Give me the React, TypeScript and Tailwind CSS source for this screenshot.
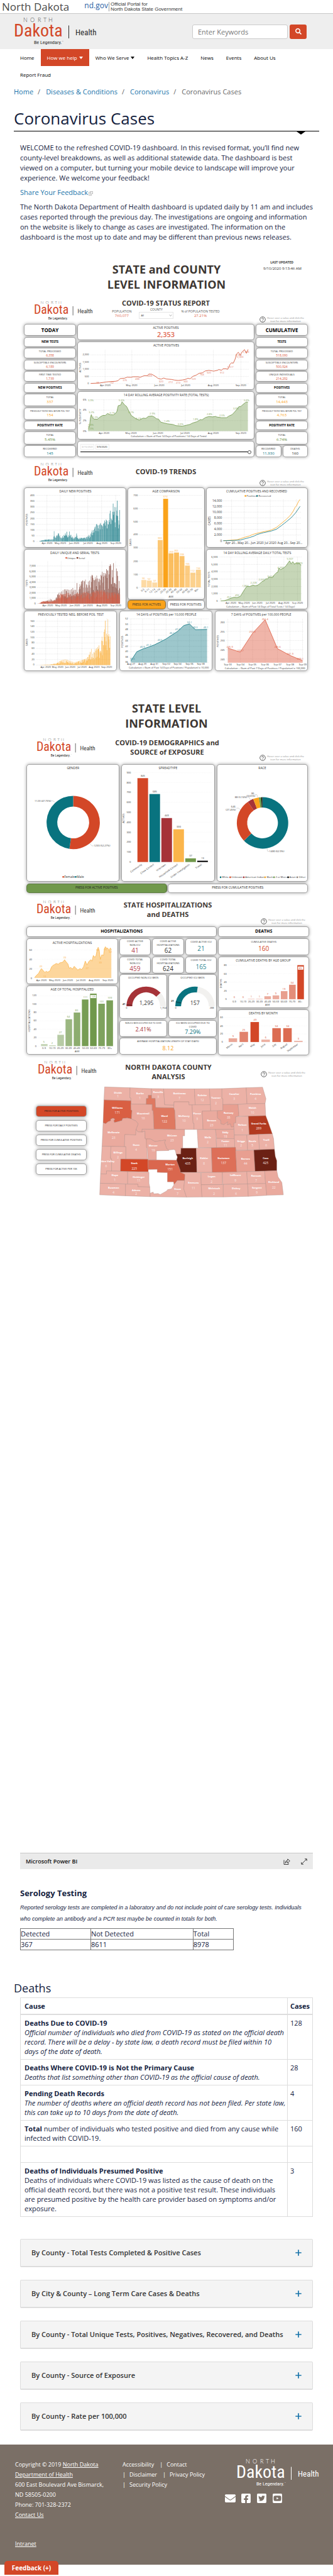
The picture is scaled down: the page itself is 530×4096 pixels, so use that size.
import React from "react";
import { FaSearch, FaEnvelope, FaFacebookSquare, FaTwitterSquare, FaYoutubeSquare } from "react-icons/fa";

/* Charts are plotted on a fine grid; sx and sy turn grid units into pixels. */
const sx = (x: number) => x * 0.338;
const sy = (y: number) => y * 0.225;

type Pts = number[];
const toPoints = (pts: Pts) => {
  const out: string[] = [];
  for (let i = 0; i < pts.length; i += 2) out.push(`${sx(pts[i]).toFixed(2)},${sy(pts[i + 1]).toFixed(2)}`);
  return out.join(" ");
};

const INK = "#333333";
const RUST = "#d34727";
const TEAL = "#09737f";
const GREEN = "#70984b";
const GOLD = "#faa31b";
const CRIMSON = "#a63338";

function Txt({ x, y, s = 4, fill = INK, a = "middle", rot, bold, children }: { x: number; y: number; s?: number; fill?: string; a?: "start" | "middle" | "end"; rot?: number; bold?: boolean; children: React.ReactNode }) {
  const px = Math.round(sx(x));
  const py = Math.round(sy(y) + s * 0.36);
  return (
    <text x={px} y={py} fontSize={s} fill={fill} textAnchor={a} fontWeight={bold ? 700 : 400} transform={rot ? `rotate(${rot} ${px} ${py})` : undefined}>
      {children}
    </text>
  );
}

const cardLook = "rounded-[4px] bg-white shadow-[0_0_0_1px_#a3a3a3,0_0_4px_2px_rgba(0,0,0,0.25)]";

function Chart({ box, label, children }: { box: [number, number, number, number]; label: string; children: React.ReactNode }) {
  const [x0, y0, x1, y1] = box;
  return (
    <div className={cardLook}>
      <svg role="img" aria-label={label} viewBox={`${sx(x0)} ${sy(y0)} ${sx(x1 - x0)} ${sy(y1 - y0)}`} className="block h-auto w-full">
        {children}
      </svg>
    </div>
  );
}

function Ticks({ xs = [], xl = [], xy = 0, ys = [], yl = [], yx = 0, x0, x1, top = 0, base = 0, s = 4, faint }: { xs?: number[]; xl?: string[]; xy?: number; ys?: number[]; yl?: string[]; yx?: number; x0: number; x1: number; top?: number; base?: number; s?: number; faint?: boolean }) {
  return (
    <g>
      {ys.map((y, i) => (
        <g key={yl[i]}>
          <line x1={sx(x0)} x2={sx(x1)} y1={sy(y)} y2={sy(y)} stroke={faint ? "#ececec" : "#c8c8c8"} strokeWidth={0.5} strokeDasharray="0.7 0.9" />
          <Txt x={yx} y={y} s={s} a="end">{yl[i]}</Txt>
        </g>
      ))}
      {xs.map((x, i) => (
        <g key={xl[i]}>
          {!faint && <line x1={sx(x)} x2={sx(x)} y1={sy(top)} y2={sy(base)} stroke="#c8c8c8" strokeWidth={0.5} strokeDasharray="0.7 0.9" />}
          <Txt x={x} y={xy} s={s}>{xl[i]}</Txt>
        </g>
      ))}
    </g>
  );
}

const Line = ({ pts, c }: { pts: Pts; c: string }) => <polyline points={toPoints(pts)} fill="none" stroke={c} strokeWidth={0.8} strokeLinejoin="round" />;

const Area = ({ pts, base, c, o = 0.4 }: { pts: Pts; base: number; c: string; o?: number }) => (
  <g>
    <polygon points={toPoints([pts[0], base, ...pts, pts[pts.length - 2], base])} fill={c} fillOpacity={o} />
    <Line pts={pts} c={c} />
  </g>
);

const Rect = ({ x, y, w, base, c, o = 1 }: { x: number; y: number; w: number; base: number; c: string; o?: number }) => (
  <rect x={sx(x)} y={sy(y)} width={sx(w)} height={sy(base - y)} fill={c} fillOpacity={o} />
);

const noise = (n: number) => {
  const v = Math.sin(n * 12.9898) * 43758.5453;
  return v - Math.floor(v);
};

function Daily({ env, base, step, c, low = 0.55, seed = 1 }: { env: Pts; base: number; step: number; c: string; low?: number; seed?: number }) {
  const bars: React.ReactNode[] = [];
  let k = 0;
  let n = 0;
  for (let x = env[0]; x < env[env.length - 2]; x += step) {
    while (k < env.length - 4 && x > env[k + 2]) k += 2;
    const t = (x - env[k]) / (env[k + 2] - env[k]);
    const top = env[k + 1] + (env[k + 3] - env[k + 1]) * t;
    const f = n % 3 === 0 ? 1 : low + (1 - low) * noise(n + seed);
    bars.push(<Rect key={n} x={x} y={base - (base - top) * f} w={step * 0.9} base={base} c={c} o={0.6 + 0.4 * noise(n * 3 + seed)} />);
    n++;
  }
  return <g>{bars}</g>;
}

const months = ["Apr 2020", "May 2020", "Jun 2020", "Jul 2020", "Aug 2020", "Sep 2020"];

const Labels = ({ items, c, s = 4 }: { items: [number, number, string][]; c: string; s?: number }) => (
  <g>
    {items.map(([x, y, t], i) => (
      <Txt key={i} x={x} y={y} s={s} fill={c}>{t}</Txt>
    ))}
  </g>
);

function Legend({ y, items, s = 4 }: { y: number; s?: number; items: [number, string, string][] }) {
  return (
    <g>
      {items.map(([x, c, t]) => (
        <g key={t}>
          <circle cx={sx(x)} cy={sy(y)} r={1.3} fill={c} />
          <Txt x={x + 6} y={y + 2} s={s} a="start">{t}</Txt>
        </g>
      ))}
    </g>
  );
}

function ring(cx: number, cy: number, R: number, r: number, a0: number, a1: number) {
  const X = sx(cx), Y = sy(cy);
  const p = (rad: number, a: number) => `${(X + rad * Math.sin(a * 2 * Math.PI)).toFixed(2)} ${(Y - rad * Math.cos(a * 2 * Math.PI)).toFixed(2)}`;
  const big = a1 - a0 > 0.5 ? 1 : 0;
  return `M${p(R, a0)}A${R} ${R} 0 ${big} 1 ${p(R, a1)}L${p(r, a1)}A${r} ${r} 0 ${big} 0 ${p(r, a0)}Z`;
}

function Logo({ className, white }: { className: string; white?: boolean }) {
  const dark = white ? "#ffffff" : "#2b2b2b";
  return (
    <svg role="img" aria-label="North Dakota Health, Be Legendary" viewBox="0 0 131 45" className={`overflow-visible ${className}`} fontFamily="'Roboto Condensed', Roboto, sans-serif">
      <text x="15 26 38 47 55" y="7" fontSize="9" fill={white ? "#ffffff" : "#555555"} fontFamily="Lato, sans-serif" fontWeight="300">NORTH</text>
      <text x="0" y="30" fontSize="28" fill={white ? "#ffffff" : RUST}>Dakota</text>
      <text x="32" y="42" fontSize="8" fill={dark}>Be Legendary.</text>
      <text x="77" y="39" fontSize="3" fill={dark}>™</text>
      <line x1="87.5" x2="87.5" y1="12.5" y2="33" stroke={dark} strokeWidth="1" />
      <text x="98" y="28" fontSize="13" fill={dark}>Health</text>
    </svg>
  );
}

function SheetHead({ className, logoClass = "", helpClass = "", children }: { className: string; logoClass?: string; helpClass?: string; children: React.ReactNode }) {
  return (
    <div className={`grid grid-cols-[1fr_auto_1fr] ${className}`}>
      <div className={`pl-[14px] ${logoClass}`}>
        <Logo className="h-8 w-[95px]" />
      </div>
      <div className="text-center">{children}</div>
      <div className={`flex items-center justify-end gap-[2px] self-end pr-[5px] ${helpClass}`}>
        <svg viewBox="0 0 10 10" className="size-[10px]">
          <circle cx="5" cy="5" r="4.3" fill="none" stroke="#222" strokeWidth="0.7" />
          <path d="M3.6 4a1.4 1.4 0 1 1 2.1 1.2Q5 5.600 5 6.300M5 7v.7" fill="none" stroke="#222" strokeWidth="0.7" />
        </svg>
        <p className="text-center text-[4px] leading-[5px] text-[#8a8a8a]">
          Hover over a value and click the
          <br />
          icon for more information
        </p>
      </div>
    </div>
  );
}

const sheetTitle = "text-[11px] leading-[15px] font-bold text-[#3d3733]";
const bigTitle = "text-center text-[18px] leading-6 font-bold text-[#3d3733]";

function Head({ h, size = "text-[5px]", children }: { h: string; size?: string; children: React.ReactNode }) {
  return <div className={`${cardLook} flex items-center justify-center font-bold text-black ${h} ${size}`}>{children}</div>;
}

function Stat({ h, label, value, color, size = "text-[5px] leading-[6px]", tiny }: { h: string; label: React.ReactNode; value: string; color: string; size?: string; tiny?: boolean }) {
  return (
    <div className={`${cardLook} flex flex-col items-center justify-center text-center ${h}`}>
      <span className={`whitespace-nowrap text-[#333] ${tiny ? "text-[3px] leading-[4px]" : "text-[4px] leading-[6px]"}`}>{label}</span>
      <span className={`${size} ${color}`}>{value}</span>
    </div>
  );
}

function StatusSheet() {
  const six = "text-[6px] leading-[8px]";
  return (
    <section className="pr-[41px] pl-[39px]">
      <SheetHead className="h-[52px] pt-[10px]" logoClass="pt-[4px]" helpClass="pb-[3px]">
        <h3 className={sheetTitle}>COVID-19 STATUS REPORT</h3>
        <div className="mt-[3px] flex items-start justify-center gap-3 text-[5px] leading-[7px] text-[#555]">
          <p>
            POPULATION
            <br />
            <span className="text-[6px] text-[#e06a50]">760,077</span>
          </p>
          <label className="-mt-[3px] flex flex-col items-center">
            COUNTY
            <span className="grid items-center">
              <select className="col-start-1 row-start-1 h-[11px] w-[55px] appearance-none border border-[#e6e6e6] bg-white pl-[2px] text-[4px] text-[#333]" defaultValue="All">
                <option>All</option>
              </select>
              <svg viewBox="0 0 6 4" className="col-start-1 row-start-1 mr-[2px] h-[3px] w-[5px] justify-self-end" fill="none" stroke="#555" strokeWidth="0.6">
                <path d="M.5.5 3 3.500 5.500.5" />
              </svg>
            </span>
          </label>
          <p>
            % of POPULATION TESTED
            <br />
            <span className="text-[6px] text-[#e06a50]">27.21%</span>
          </p>
        </div>
      </SheetHead>
      <div className="grid grid-cols-[81fr_280fr_81fr] gap-x-1">
        <div className="flex flex-col justify-between">
          <Head h="h-[17px]" size="text-[8px]">TODAY</Head>
          <Head h="h-[14px]">NEW TESTS</Head>
          <Stat h="h-[15px]" label="TOTAL PROCESSED" value="6,358" color="text-[#d9553a]" />
          <Stat h="h-[15px]" label="SUSCEPTIBLE ENCOUNTERS" value="6,189" color="text-[#d9553a]" />
          <Stat h="h-[15px]" label="FIRST TIME TESTED" value="1,739" color="text-[#d9553a]" />
          <Head h="h-[14px]">NEW POSITIVES</Head>
          <Stat h="h-[18px]" label="TOTAL" value="337" color="text-[#faa31b]" size={six} />
          <Stat h="h-[18px]" label="PREVIOUSLY TESTED NEG. BEFORE POS. TEST" tiny value="154" color="text-[#faa31b]" size={six} />
          <Head h="h-[13px]">POSITIVITY RATE</Head>
          <Stat h="h-[19px]" label="TOTAL" value="5.45%" color="text-[#5f8a3a]" size={six} />
          <Stat h="h-[17px]" label="RECOVERED" value="145" color="text-[#09737f]" size={six} />
        </div>
        <div className="flex flex-col gap-[4px]">
          <div className={`${cardLook} flex h-[24px] flex-col items-center text-center`}>
            <span className="mt-[2px] text-[5px] leading-[7px] text-[#333]">ACTIVE POSITIVES</span>
            <span className="text-[11px] leading-[14px] font-semibold text-[#e0664f]">2,353</span>
          </div>
          <Chart box={[368, 616, 1197, 949]} label="Active positives by day">
            <Txt x={783} y={639} s={5}>ACTIVE POSITIVES</Txt>
            <Ticks xs={[496, 622, 751, 877, 1006, 1136]} xl={months} xy={924} ys={[706, 757, 808, 859, 910]} yl={["2,000", "1,500", "1,000", "500", "0"]} yx={420} x0={428} x1={1173} top={672} base={910} />
            <Txt x={383} y={790} rot={-90}>ACTIVES</Txt>
            <Line c={RUST} pts={[428, 908, 470, 905, 500, 898, 520, 895, 545, 893, 557, 889, 567, 874, 588, 871, 600, 864, 618, 865, 628, 861, 652, 861, 661, 865, 672, 858, 682, 853, 695, 854, 702, 842, 716, 843, 735, 860, 745, 872, 760, 878, 772, 870, 785, 877, 810, 880, 822, 884, 840, 887, 860, 884, 878, 878, 886, 872, 897, 875, 910, 858, 925, 850, 940, 836, 955, 833, 968, 820, 985, 816, 1000, 819, 1008, 821, 1025, 816, 1032, 810, 1045, 815, 1052, 805, 1064, 804, 1074, 808, 1085, 773, 1092, 762, 1100, 765, 1108, 740, 1117, 698, 1124, 688, 1133, 708, 1141, 686, 1153, 669, 1162, 695, 1170, 668]} />
            <Labels c="#e0765f" items={[[463, 906, "38"], [526, 905, "132"], [588, 888, "376"], [648, 880, "488"], [706, 857, "669"], [760, 894, "320"], [806, 900, "272"], [839, 906, "210"], [877, 897, "300"], [914, 876, "520"], [952, 849, "768"], [986, 834, "920"], [1048, 834, "912"], [1086, 792, "1,317"], [1125, 709, "2,164"], [1132, 723, "2,003"], [1160, 687, "2,353"]]} />
          </Chart>
          <Chart box={[368, 967, 1197, 1303]} label="14 day rolling average positivity rate">
            <Txt x={783} y={991} s={5}>14 DAY ROLLING AVERAGE POSITIVITY RATE (TOTAL TESTS)</Txt>
            <Ticks xs={[490, 617, 747, 874, 1005, 1136]} xl={months} xy={1260} ys={[1023, 1097, 1171, 1245]} yl={["6%", "4%", "2%", "0%"]} yx={408} x0={416} x1={1173} top={1023} base={1245} />
            <Txt x={383} y={1134} rot={-90}>% POSITIVITY</Txt>
            <Area c={GREEN} base={1245} pts={[416, 1210, 422, 1218, 427, 1150, 431, 1128, 436, 1148, 443, 1160, 460, 1161, 470, 1147, 485, 1134, 497, 1134, 508, 1120, 520, 1129, 535, 1130, 545, 1120, 552, 1105, 558, 1065, 570, 1060, 576, 1037, 588, 1060, 597, 1070, 607, 1100, 620, 1135, 637, 1153, 657, 1167, 675, 1153, 688, 1155, 700, 1141, 718, 1138, 730, 1147, 737, 1157, 748, 1160, 758, 1181, 775, 1188, 790, 1193, 815, 1198, 830, 1206, 860, 1210, 880, 1203, 895, 1198, 910, 1187, 930, 1178, 945, 1163, 953, 1165, 970, 1148, 985, 1142, 1003, 1144, 1018, 1141, 1022, 1145, 1045, 1150, 1068, 1150, 1080, 1138, 1095, 1128, 1105, 1112, 1118, 1090, 1126, 1073, 1136, 1070, 1147, 1055, 1160, 1040, 1169, 1040]} />
            <Labels c="#7fa55c" items={[[430, 1031, "5.9%"], [431, 1112, "3.2%"], [449, 1149, "2.2%"], [430, 1203, "0.8%"], [430, 1230, "0.0%"], [529, 1118, "3.1%"], [575, 1031, "5.6%"], [617, 1115, "3.1%"], [655, 1156, "2.1%"], [719, 1124, "2.9%"], [787, 1178, "1.4%"], [853, 1196, "0.9%"], [922, 1163, "1.8%"], [989, 1128, "2.8%"], [1047, 1136, "2.5%"], [1111, 1085, "3.9%"], [1162, 1031, "5.6%"]]} />
            <Txt x={796} y={1284}>Calculation = (Sum of Past 14 Days of Positives / 14 Days of Tests)</Txt>
          </Chart>
          <div className={`${cardLook} h-[24px] px-1 pt-1`}>
            <div className="flex gap-[2px]">
              <input aria-label="Start date" className="h-[9px] w-[22px] border border-[#eee] px-[1px] text-[4px] text-[#b5b5b5]" defaultValue="3/15/2020" />
              <input aria-label="End date" className="h-[9px] w-[22px] border border-[#eee] px-[1px] text-[4px] text-[#222]" defaultValue="9/9/2020" />
            </div>
            <input aria-label="Date range" type="range" min="0" max="100" defaultValue="100" className="block h-[7px] w-full appearance-none bg-[linear-gradient(#000,#000)] bg-[length:100%_1px] bg-center bg-no-repeat [&::-webkit-slider-thumb]:size-[6px] [&::-webkit-slider-thumb]:appearance-none [&::-webkit-slider-thumb]:rounded-full [&::-webkit-slider-thumb]:border [&::-webkit-slider-thumb]:border-[#555] [&::-webkit-slider-thumb]:bg-white" />
          </div>
        </div>
        <div className="flex flex-col justify-between">
          <Head h="h-[17px]" size="text-[8px]">CUMULATIVE</Head>
          <Head h="h-[14px]">TESTS</Head>
          <Stat h="h-[15px]" label="TOTAL PROCESSED" value="518,090" color="text-[#d9553a]" />
          <Stat h="h-[15px]" label="SUSCEPTIBLE ENCOUNTERS" value="500,924" color="text-[#d9553a]" />
          <Stat h="h-[15px]" label="UNIQUE INDIVIDUALS" value="214,292" color="text-[#d9553a]" />
          <Head h="h-[14px]">POSITIVES</Head>
          <Stat h="h-[18px]" label="TOTAL" value="14,443" color="text-[#faa31b]" size={six} />
          <Stat h="h-[18px]" label="PREVIOUSLY TESTED NEG. BEFORE POS. TEST" tiny value="4,763" color="text-[#faa31b]" size={six} />
          <Head h="h-[13px]">POSITIVITY RATE</Head>
          <Stat h="h-[19px]" label="TOTAL" value="6.74%" color="text-[#5f8a3a]" size={six} />
          <div className="grid grid-cols-2 gap-1">
            <Stat h="h-[17px]" label="RECOVERED" value="11,930" color="text-[#09737f]" size={six} />
            <Stat h="h-[17px]" label="DEATHS" value="160" color="text-[#222]" size={six} />
          </div>
        </div>
      </div>
    </section>
  );
}

const ages = ["0-5", "6-11", "12-14", "15-19", "20-29", "30-39", "40-49", "50-59", "60-69", "70-79", "80+"];
const ageCases = [56, 52, 37, 360, 674, 259, 265, 238, 166, 112, 134];
const ageTone = [0.4, 0.4, 0.4, 0.6, 1, 0.7, 0.7, 0.65, 0.55, 0.5, 0.5];

function TrendsSheet() {
  return (
    <section className="pr-[41px] pl-[39px]">
      <SheetHead className="h-[50px] pt-[9px]" helpClass="pb-[3px]">
        <h3 className={`${sheetTitle} pt-[7px]`}>COVID-19 TRENDS</h3>
      </SheetHead>
      <div className="grid grid-cols-[161fr_121fr_160fr] gap-x-1">
        <div className="flex flex-col justify-between">
          <Chart box={[116, 239, 591, 654]} label="Daily new positives">
            <Txt x={355} y={262} s={5}>DAILY NEW POSITIVES</Txt>
            <Ticks xs={[221, 284, 350, 413, 478, 544]} xl={months} xy={630} ys={[291, 332, 372, 413, 454, 495, 535, 576, 616]} yl={["400", "350", "300", "250", "200", "150", "100", "50", "0"]} yx={164} x0={170} x1={565} top={288} base={616} />
            <Txt x={130} y={455} rot={-90}>POSITIVES</Txt>
            <Daily c={TEAL} base={616} step={2.2} env={[188, 611, 210, 603, 230, 600, 246, 598, 251, 595, 254, 543, 260, 590, 275, 555, 285, 590, 300, 570, 314, 546, 320, 585, 325, 540, 335, 575, 345, 590, 355, 580, 360, 558, 365, 590, 385, 590, 400, 588, 412, 580, 417, 566, 422, 590, 428, 540, 440, 535, 445, 518, 455, 488, 462, 515, 468, 490, 475, 482, 480, 510, 490, 470, 502, 455, 509, 495, 517, 395, 521, 410, 526, 480, 531, 350, 536, 313, 541, 480, 546, 325, 551, 328, 556, 520, 559, 420, 563, 343]} />
          </Chart>
          <Chart box={[116, 675, 591, 1092]} label="Daily unique and serial tests">
            <Txt x={353} y={698} s={5}>DAILY UNIQUE AND SERIAL TESTS</Txt>
            <Legend y={733} items={[[312, "#dd5a40", "Unique"], [364, "#7a3528", "Serial"]]} />
            <Ticks xs={[225, 288, 352, 415, 479, 544]} xl={months} xy={1069} ys={[790, 828, 866, 904, 941, 979, 1017, 1055]} yl={["7,000", "6,000", "5,000", "4,000", "3,000", "2,000", "1,000", "0"]} yx={168} x0={175} x1={565} top={757} base={1055} />
            <Txt x={130} y={905} rot={-90}>TESTS</Txt>
            <Daily c="#7a3528" base={1055} step={2.2} low={0.4} seed={7} env={[190, 1050, 205, 1038, 220, 1035, 237, 1022, 250, 1035, 262, 1020, 272, 980, 285, 975, 300, 955, 316, 955, 330, 960, 346, 940, 352, 985, 361, 903, 368, 990, 372, 925, 385, 890, 395, 895, 402, 885, 410, 940, 416, 885, 425, 900, 430, 828, 438, 885, 445, 890, 451, 840, 458, 880, 470, 880, 477, 828, 488, 840, 498, 840, 502, 790, 508, 830, 517, 762, 525, 830, 535, 757, 541, 950, 546, 810, 551, 780, 556, 980, 563, 815]} />
            <Daily c="#dd5a40" base={1055} step={2.2} low={0.4} seed={3} env={[180, 1054, 195, 1042, 215, 1036, 240, 1035, 262, 1030, 275, 1000, 285, 985, 300, 990, 320, 978, 340, 1000, 361, 980, 380, 985, 400, 970, 420, 985, 450, 965, 480, 960, 510, 978, 540, 975, 563, 990]} />
          </Chart>
        </div>
        <div className="flex flex-col justify-between">
          <Chart box={[603, 239, 960, 1020]} label="Age comparison">
            <Txt x={782} y={262} s={5}>AGE COMPARISON</Txt>
            <Ticks ys={[291, 384, 477, 569, 662, 754, 847, 939]} yl={["700", "600", "500", "400", "300", "200", "100", "0"]} yx={648} x0={653} x1={950} />
            <Txt x={618} y={615} rot={-90}>CASES</Txt>
            {ageCases.map((v, i) => {
              const x = 665 + i * 25.6;
              const top = 939 - v * 0.926;
              return (
                <g key={ages[i]}>
                  <Rect x={x} y={top} w={23} base={939} c={GOLD} o={ageTone[i]} />
                  <Txt x={x + 11} y={top - 13} fill="#fbb14a">{v}</Txt>
                  <Txt x={x + 14} y={950} a="end" rot={-35}>{ages[i]}</Txt>
                </g>
              );
            })}
            <Txt x={805} y={1002}>AGE</Txt>
          </Chart>
          <div className="grid grid-cols-2 gap-1 text-[5px] whitespace-nowrap text-[#333]">
            <button className="h-[13px] rounded-[4px] bg-[#faa31b] shadow-[0_0_0_1px_#9a7a40,0_0_4px_2px_rgba(0,0,0,0.25)]">PRESS FOR ACTIVES</button>
            <button className={`${cardLook} h-[13px]`}>PRESS FOR POSITIVES</button>
          </div>
        </div>
        <div className="flex flex-col gap-1">
          <Chart box={[972, 239, 1445, 656]} label="Cumulative positives and recovered">
            <Txt x={1208} y={262} s={5}>CUMULATIVE POSITIVES AND RECOVERED</Txt>
            <Legend y={295} items={[[1154, GOLD, "Positives"], [1209, TEAL, "Recovered"]]} />
            <Ticks s={5} xs={[1089, 1149, 1211, 1271, 1333, 1394]} xl={["Apr 20...", "May 20...", "Jun 2020", "Jul 2020", "Aug 20...", "Sep 20..."]} xy={629} ys={[329, 369, 409, 450, 490, 531, 571, 612]} yl={["14,000", "12,000", "10,000", "8,000", "6,000", "4,000", "2,000", "0"]} yx={1043} x0={1049} x1={1418} top={320} base={612} />
            <Txt x={990} y={465} s={5} rot={-90}>CASES</Txt>
            <Line c={GOLD} pts={[1050, 611, 1080, 608, 1115, 604, 1130, 597, 1150, 587, 1172, 578, 1190, 566, 1220, 554, 1245, 546, 1275, 536, 1300, 517, 1320, 493, 1345, 462, 1365, 433, 1380, 400, 1388, 375, 1395, 364, 1403, 336, 1411, 320]} />
            <Line c={TEAL} pts={[1050, 611, 1100, 609, 1130, 606, 1150, 598, 1175, 588, 1195, 578, 1211, 566, 1240, 554, 1275, 543, 1300, 530, 1325, 503, 1350, 473, 1370, 448, 1390, 415, 1411, 369]} />
          </Chart>
          <Chart box={[972, 675, 1445, 1092]} label="14 day rolling average daily total tests">
            <Txt x={1210} y={698} s={5}>14 DAY ROLLING AVERAGE DAILY TOTAL TESTS</Txt>
            <Ticks xs={[1085, 1147, 1210, 1272, 1335, 1399]} xl={months} xy={1053} ys={[727, 779, 831, 883, 935, 986, 1038]} yl={["6,000", "5,000", "4,000", "3,000", "2,000", "1,000", "0"]} yx={1023} x0={1032} x1={1420} top={727} base={1038} />
            <Txt x={987} y={880} rot={-90}>TOTAL TESTS</Txt>
            <Area c={GREEN} base={1038} pts={[1038, 1037, 1055, 1035, 1070, 1028, 1085, 1018, 1100, 1011, 1115, 1013, 1130, 1005, 1137, 988, 1150, 957, 1160, 935, 1175, 935, 1190, 925, 1200, 930, 1212, 926, 1222, 915, 1232, 900, 1242, 895, 1250, 880, 1258, 882, 1265, 867, 1280, 873, 1292, 850, 1300, 838, 1306, 835, 1312, 805, 1320, 817, 1335, 803, 1345, 790, 1354, 770, 1362, 754, 1369, 775, 1377, 760, 1386, 778, 1392, 768, 1408, 770, 1416, 787]} />
            <Labels c="#7fa55c" items={[[1038, 1024, "1"], [1076, 1010, "251"], [1116, 999, "495"], [1155, 933, "1,804"], [1191, 910, "2,228"], [1231, 887, "2,656"], [1271, 863, "3,154"], [1320, 803, "4,203"], [1364, 740, "5,507"], [1407, 772, "4,870"]]} />
            <Txt x={1226} y={1076}>Calculation = (Sum of Past 14 Days of Total Tests / 14 Days)</Txt>
          </Chart>
        </div>
      </div>
      <div className="mt-1 grid grid-cols-3 gap-x-[6px]">
        <Chart box={[116, 1109, 548, 1527]} label="Previously tested negative before positive test">
          <Txt x={333} y={1132} s={5}>PREVIOUSLY TESTED NEG. BEFORE POS. TEST</Txt>
          <Ticks xs={[216, 272, 331, 387, 445, 504]} xl={months} xy={1503} ys={[1179, 1218, 1255, 1294, 1333, 1372, 1411, 1450, 1489]} yl={["160", "140", "120", "100", "80", "60", "40", "20", "0"]} yx={164} x0={170} x1={522} top={1160} base={1489} />
          <Txt x={130} y={1324} rot={-90}>CASES</Txt>
          <Daily c={GOLD} base={1489} step={2} low={0.35} seed={5} env={[190, 1488, 240, 1484, 265, 1477, 280, 1462, 295, 1452, 310, 1448, 330, 1460, 350, 1470, 375, 1458, 395, 1448, 410, 1440, 420, 1410, 430, 1375, 438, 1420, 445, 1380, 455, 1370, 466, 1350, 474, 1400, 480, 1275, 485, 1330, 490, 1255, 496, 1175, 500, 1310, 507, 1160, 511, 1180, 515, 1350, 519, 1190]} />
        </Chart>
        <Chart box={[566, 1109, 998, 1527]} label="14 days of positives per 10,000 people">
          <Txt x={783} y={1132} s={5}>14 DAYS of POSITIVES per 10,000 PEOPLE</Txt>
          <Ticks xs={[617, 672, 728, 783, 838, 893, 948]} xl={["Aug 27", "Aug 29", "Aug 31", "Sep 02", "Sep 04", "Sep 06", "Sep 08"]} xy={1484} ys={[1162, 1201, 1239, 1278, 1317, 1356, 1394, 1433, 1471]} yl={["52", "50", "48", "46", "44", "42", "40", "38", "36"]} yx={603} x0={611} x1={983} top={1162} base={1471} />
          <Txt x={580} y={1317} rot={-90}>POSITIVES</Txt>
          <Area c={TEAL} base={1471} pts={[617, 1460, 645, 1395, 672, 1376, 700, 1362, 728, 1346, 755, 1326, 783, 1304, 810, 1277, 838, 1250, 866, 1210, 893, 1198, 921, 1239, 976, 1237]} />
          <Labels c="#3d909b" items={[[623, 1445, "36.6"], [672, 1364, "40.9"], [700, 1350, "41.7"], [755, 1313, "43.5"], [810, 1263, "46.1"], [838, 1238, "47.4"], [893, 1187, "50.1"], [921, 1226, "48.0"], [970, 1224, "48.1"]]} />
          <Txt x={797} y={1509}>Calculation = (Sum of Past 14 Days of Positives / Population) x 10,000</Txt>
        </Chart>
        <Chart box={[1016, 1109, 1447, 1527]} label="7 days of positives per 100,000 people">
          <Txt x={1232} y={1132} s={5}>7 DAYS of POSITIVES per 100,000 PEOPLE</Txt>
          <Ticks xs={[1074, 1132, 1190, 1249, 1307, 1366, 1425]} xl={["Sep 03", "Sep 04", "Sep 05", "Sep 06", "Sep 07", "Sep 08", "Sep 09"]} xy={1484} ys={[1185, 1250, 1315, 1380, 1445]} yl={["260", "255", "250", "245", "240"]} yx={1059} x0={1066} x1={1430} top={1162} base={1471} />
          <Txt x={1030} y={1315} rot={-90}>POSITIVES</Txt>
          <Area c="#dd5a40" base={1471} o={0.45} pts={[1074, 1368, 1132, 1397, 1190, 1264, 1249, 1168, 1307, 1372, 1366, 1420, 1425, 1457]} />
          <Labels c="#dd5a40" items={[[1082, 1356, "245.9"], [1132, 1384, "243.7"], [1190, 1251, "253.9"], [1249, 1168, "261.4"], [1307, 1358, "245.6"], [1366, 1406, "241.9"], [1415, 1444, "239.1"]]} />
          <Txt x={1248} y={1509}>Calculation = (Sum of Past 7 Days of Positives / Population) x 100,000</Txt>
        </Chart>
      </div>
    </section>
  );
}

const spread: [string, number, string][] = [["Community", 845, RUST], ["Close Contact", 685, TEAL], ["Unknown", 443, CRIMSON], ["Household Contact", 330, "#fbb54b"], ["Under Investigation", 37, GREEN], ["Travel", 13, "#000000"]];
const race: [string, number, number][] = [[TEAL, 0, 0.629], [RUST, 0.629, 0.9035], [CRIMSON, 0.9035, 0.941], [GOLD, 0.941, 0.9775], [GREEN, 0.9775, 0.992], ["#000000", 0.992, 0.999]];

function Leader({ pts }: { pts: Pts }) {
  return <polyline points={toPoints(pts)} fill="none" stroke="#aaaaaa" strokeWidth={0.5} />;
}

function DemographicsSheet() {
  return (
    <section className="pr-[41px] pl-[43px]">
      <SheetHead className="h-[54px] pt-[11px]" helpClass="pb-[6px]">
        <h3 className={sheetTitle}>COVID-19 DEMOGRAPHICS and<br />SOURCE of EXPOSURE</h3>
      </SheetHead>
      <div className="grid grid-cols-[146fr_146fr_143fr] gap-x-[5px]">
        <Chart box={[127, 547, 559, 1364]} label="Gender">
          <Txt x={344} y={571} s={5}>GENDER</Txt>
          <path d={ring(344, 954, 42.3, 25.3, 0, 0.5227)} fill={RUST} />
          <path d={ring(344, 954, 42.3, 25.3, 0.5227, 0.99999)} fill={TEAL} />
          <Leader pts={[241, 801, 248, 801, 258, 812]} />
          <Leader pts={[422, 1103, 432, 1119, 440, 1119]} />
          <Txt x={202} y={801}>1123 (47.73%)</Txt>
          <Txt x={479} y={1119}>1230 (52.27%)</Txt>
          <Legend y={1338} s={5} items={[[297, RUST, "Female"], [356, TEAL, "Male"]]} />
        </Chart>
        <Chart box={[576, 547, 1008, 1364]} label="Spread type">
          <Txt x={793} y={571} s={5}>SPREADTYPE</Txt>
          <Ticks faint ys={[603, 672, 742, 813, 882, 952, 1023, 1092, 1162, 1233]} yl={["900", "800", "700", "600", "500", "400", "300", "200", "100", "0"]} yx={619} x0={632} x1={1000} />
          <Txt x={590} y={918} rot={-90}>ACTIVES</Txt>
          {spread.map(([name, v, c], i) => {
            const x = 649 + i * 56.200;
            const top = 1233 - v * 0.7;
            return (
              <g key={name}>
                <Rect x={x} y={top} w={50} base={1233} c={c} />
                <Txt x={x + 25} y={top - 16}>{v}</Txt>
                <Txt x={x + 22} y={1246} a="end" rot={-35}>{name}</Txt>
              </g>
            );
          })}
        </Chart>
        <Chart box={[1023, 547, 1446, 1364]} label="Race">
          <Txt x={1235} y={571} s={5}>RACE</Txt>
          {race.map(([c, a0, a1]) => (
            <path key={c} d={ring(1235, 957, 40.8, 24.4, a0, a1)} fill={c} />
          ))}
          <Leader pts={[1112, 853, 1122, 853, 1131, 864]} />
          <Leader pts={[1163, 775, 1172, 775, 1178, 795]} />
          <Leader pts={[1199, 757, 1208, 757, 1212, 775]} />
          <Leader pts={[1256, 1140, 1259, 1157, 1267, 1157]} />
          <Labels c={INK} items={[[1190, 747, "86"], [1179, 769, "(3.65%)"], [1134, 777, "88 (3.74%)"], [1098, 843, "646"], [1087, 864, "(27.45%)"], [1303, 1158, "1480 (62.9%)"]]} />
          <Legend y={1340} items={[[1038, TEAL, "White"], [1083, RUST, "Unknown"], [1147, CRIMSON, "American Indian"], [1247, GOLD, "Black"], [1289, GREEN, "2 or More"], [1355, "#000", "Asian"], [1398, "#8a7f78", "Other"]]} />
        </Chart>
      </div>
      <div className="mt-[5px] grid grid-cols-2 gap-x-[3px] text-[5px] text-[#222]">
        <button className="h-[13px] rounded-[4px] bg-[#70984b] shadow-[0_0_0_1px_#5f7d45,0_0_4px_2px_rgba(0,0,0,0.25)]">PRESS FOR ACTIVE POSITIVES</button>
        <button className={`${cardLook} h-[13px]`}>PRESS FOR CUMULATIVE POSITIVES</button>
      </div>
    </section>
  );
}

const decades = ["0-9", "10-19", "20-29", "30-39", "40-49", "50-59", "60-69", "70-79", "80+"];
const hospAges: [number, number][] = [[5, 0.4], [2, 0.4], [27, 0.5], [64, 0.7], [80, 0.8], [111, 0.95], [125, 1], [101, 0.9], [109, 0.92]];
const deathAges: [number, number][] = [[0, 0.3], [0, 0.3], [1, 0.4], [1, 0.4], [7, 0.45], [9, 0.45], [19, 0.52], [34, 0.62], [80, 1]];
const deathMonths: [string, number, number][] = [["March", 9, 0.48], ["April", 25, 0.68], ["May", 49, 1], ["June", 6, 0.42], ["July", 34, 0.8], ["August", 34, 0.8], ["September", 3, 0.4]];

function Gauge({ box, cx, title, value, max, mark, share, markShare, c }: { box: [number, number, number, number]; cx: number; title: string; value: string; max: string; mark: string; share: number; markShare: number; c: string }) {
  const a = Math.PI * markShare;
  const X = sx(cx), Y = sy(780);
  return (
    <Chart box={box} label={title}>
      <Txt x={(box[0] + box[2]) / 2} y={578}>{title}</Txt>
      <path d={ring(cx, 780, 31.6, 22.3, -0.25, 0.25)} fill="#f2f1ef" />
      <path d={ring(cx, 780, 31.6, 22.3, -0.25, -0.25 + share / 2)} fill={c} />
      <line x1={X - 31.6 * Math.cos(a)} y1={Y - 31.6 * Math.sin(a)} x2={X - 22.3 * Math.cos(a)} y2={Y - 22.3 * Math.sin(a)} stroke="#000" strokeWidth={0.5} />
      <Txt x={cx} y={756} s={9}>{value}</Txt>
      <Txt x={cx - 105} y={markShare > 0.05 ? 740 : 761} s={4} bold>{mark}</Txt>
      <Txt x={cx - 92} y={795}>0</Txt>
      <Txt x={cx + 80} y={795}>{max}</Txt>
    </Chart>
  );
}

function HospitalSheet() {
  const ten = "text-[10px] leading-[11px]";
  const two = (a: string, b: string) => (
    <>
      {a}
      <br />
      {b}
    </>
  );
  return (
    <section className="pr-[39px] pl-[43px]">
      <SheetHead className="h-[55px] pt-[12px]" helpClass="pb-[4px]">
        <h3 className={sheetTitle}>STATE HOSPITALIZATIONS<br />and DEATHS</h3>
      </SheetHead>
      <div className="grid grid-cols-[302fr_143fr] gap-x-1">
        <div>
          <Head h="h-[15px]" size="text-[7px]">HOSPITALIZATIONS</Head>
          <div className="mt-1 grid grid-cols-[144fr_154fr] gap-x-1">
            <div className="flex flex-col gap-1">
              <Chart box={[127, 303, 553, 619]} label="Active hospitalizations">
                <Txt x={340} y={328} s={5}>ACTIVE HOSPITALIZATIONS</Txt>
                <Ticks faint xs={[194, 256, 320, 381, 444, 508]} xl={months} xy={594} ys={[381, 447, 513, 579]} yl={["60", "40", "20", "0"]} yx={151} x0={160} x1={530} />
                <Area c="#fbb54b" base={579} o={0.55} pts={[163, 576, 172, 560, 182, 546, 188, 528, 195, 513, 204, 528, 211, 540, 218, 532, 224, 538, 235, 530, 243, 500, 250, 490, 256, 485, 265, 477, 275, 482, 282, 472, 290, 470, 298, 465, 304, 450, 312, 466, 320, 480, 326, 510, 334, 505, 341, 517, 350, 497, 358, 510, 367, 523, 377, 513, 385, 520, 394, 500, 402, 460, 410, 487, 419, 462, 428, 450, 434, 460, 440, 420, 447, 433, 453, 420, 458, 380, 463, 362, 468, 385, 473, 447, 480, 415, 488, 420, 493, 370, 497, 358, 503, 370, 508, 368, 514, 385, 520, 367, 525, 378]} />
                <Labels c="#fbb14a" items={[[192, 495, "20"], [210, 567, "10"], [304, 432, "39"], [412, 510, "27"], [463, 381, "66"], [473, 471, "39"], [496, 378, "65"], [521, 393, "62"]]} />
              </Chart>
              <Chart box={[127, 634, 553, 1117]} label="Age of total hospitalized">
                <Txt x={340} y={658} s={5}>AGE OF TOTAL HOSPITALIZED</Txt>
                <Ticks faint ys={[702, 762, 820, 880, 940, 999, 1059]} yl={["120", "100", "80", "60", "40", "20", "0"]} yx={171} x0={180} x1={540} />
                <Txt x={141} y={872} rot={-90}>HOSPITALIZATIONS</Txt>
                {hospAges.map(([v, o], i) => {
                  const x = 193 + i * 38.600;
                  const top = 1059 - v * 2.975;
                  return (
                    <g key={decades[i]}>
                      <Rect x={x} y={top} w={31} base={1059} c={GREEN} o={o} />
                      {v === 125 && <rect x={sx(x + 2)} y={sy(697)} width={sx(27)} height={sy(22)} fill="#fff" />}
                      <Txt x={x + 15} y={v === 125 ? 708 : top - 16} fill={GREEN}>{v}</Txt>
                      <Txt x={x + 15} y={1074}>{decades[i]}</Txt>
                    </g>
                  );
                })}
                <Txt x={364} y={1098}>AGE</Txt>
              </Chart>
            </div>
            <div className="flex flex-col justify-between">
              <div className="grid grid-cols-3 gap-x-1 gap-y-[4px]">
                <Stat h="h-[25px]" label={two("COVID ACTIVE", "NON-ICU")} value="41" color="text-[#b5464f]" size={ten} />
                <Stat h="h-[25px]" label={two("COVID ACTIVE", "HOSPITALIZATIONS")} value="62" color="text-[#333]" size={ten} />
                <Stat h="h-[25px]" label="COVID ACTIVE ICU" value="21" color="text-[#2f8793]" size="text-[10px] leading-[15px]" />
                <Stat h="h-[25px]" label={two("COVID TOTAL", "NON-ICU")} value="459" color="text-[#b5464f]" size={ten} />
                <Stat h="h-[25px]" label={two("COVID TOTAL", "HOSPITALIZATIONS")} value="624" color="text-[#333]" size={ten} />
                <Stat h="h-[25px]" label="COVID TOTAL ICU" value="165" color="text-[#2f8793]" size="text-[10px] leading-[15px]" />
              </div>
              <div className="grid grid-cols-2 gap-x-1">
                <Gauge box={[564, 556, 787, 865]} cx={688} title="OCCUPIED NON-ICU BEDS" value="1,295" max="1,704" mark="41" share={0.76} markShare={0.024} c={CRIMSON} />
                <Gauge box={[797, 556, 1020, 865]} cx={920} title="OCCUPIED ICU BEDS" value="157" max="288" mark="21" share={0.545} markShare={0.073} c={TEAL} />
              </div>
              <div className="grid grid-cols-2 gap-x-1">
                <Stat h="h-[25px]" label="NON-ICU BEDS OCCUPIED DUE TO COVID" tiny value="2.41%" color="text-[#a63338]" size="text-[9px] leading-[16px]" />
                <Stat h="h-[25px]" label={two("ICU BEDS OCCUPIED DUE TO", "COVID")} value="7.29%" color="text-[#09737f]" size="text-[9px] leading-[10px]" />
              </div>
              <Stat h="h-[25px]" label="AVERAGE HOSPITALIZATION LENGTH OF STAY (DAYS)" value="8.12" color="text-[#faa31b]" size="text-[9px] leading-[15px]" />
            </div>
          </div>
        </div>
        <div className="flex flex-col gap-1">
          <Head h="h-[15px]" size="text-[7px]">DEATHS</Head>
          <Stat h="h-[25px]" label="CUMULATIVE DEATHS" value="160" color="text-[#d34727]" size="text-[10px] leading-[15px]" />
          <Chart box={[1030, 427, 1452, 784]} label="Cumulative deaths by age group">
            <Txt x={1241} y={451} s={5}>CUMULATIVE DEATHS BY AGE GROUP</Txt>
            <Ticks faint ys={[483, 543, 604, 664, 724]} yl={["80", "60", "40", "20", "0"]} yx={1068} x0={1076} x1={1440} />
            <Txt x={1044} y={605} rot={-90}>DEATHS</Txt>
            {deathAges.map(([v, o], i) => {
              const x = 1090 + i * 38.800;
              const top = 724 - v * 3.01;
              return (
                <g key={decades[i]}>
                  <Rect x={x} y={top} w={31} base={724} c={RUST} o={o} />
                  {v === 80 && <rect x={sx(x + 3)} y={sy(493)} width={sx(25)} height={sy(22)} fill="#fff" />}
                  <Txt x={x + 15} y={v === 80 ? 503 : top - 15} fill={RUST}>{v === 80 ? 89 : v}</Txt>
                  <Txt x={x + 15} y={741}>{decades[i]}</Txt>
                </g>
              );
            })}
            <Txt x={1260} y={764}>AGE</Txt>
          </Chart>
          <Chart box={[1030, 800, 1452, 1117]} label="Deaths by month">
            <Txt x={1241} y={824} s={5}>DEATHS BY MONTH</Txt>
            <Ticks faint ys={[853, 912, 969, 1026]} yl={["60", "40", "20", "0"]} yx={1049} x0={1058} x1={1445} />
            {deathMonths.map(([m, v, o], i) => {
              const x = 1077 + i * 51.400;
              const top = 1026 - v * 2.88;
              return (
                <g key={m}>
                  <Rect x={x} y={top} w={40} base={1026} c={RUST} o={o} />
                  <Txt x={x + 20} y={top - 15} fill={RUST}>{v}</Txt>
                  <Txt x={x + 20} y={1038} a="end" rot={-35}>{m}</Txt>
                </g>
              );
            })}
          </Chart>
        </div>
      </div>
    </section>
  );
}

type County = [string, number, number, number, number, Pts];
const counties: County[] = [
  ["Divide", 1, 556, 272, 298, [493, 234, 613, 240, 612, 310, 617, 312, 617, 332, 490, 326]],
  ["Burke", 1, 661, 278, 314, [613, 240, 714, 246, 714, 293, 699, 293, 699, 314, 690, 316, 689, 357, 617, 355, 617, 312, 612, 310]],
  ["Renville", 3, 745, 270, 305, [714, 246, 771, 247, 776, 360, 819, 362, 819, 382, 733, 380, 731, 315, 714, 315]],
  ["Bottineau", 7, 847, 278, 314, [771, 247, 916, 248, 920, 361, 890, 361, 890, 340, 820, 340, 819, 362, 776, 360]],
  ["Rolette", 12, 952, 290, 325, [916, 248, 987, 247, 990, 318, 991, 360, 920, 361]],
  ["Towner", 2, 1017, 310, 347, [987, 247, 1046, 246, 1046, 315, 1050, 317, 1050, 401, 992, 404, 990, 318]],
  ["Cavalier", 3, 1104, 281, 317, [1046, 246, 1160, 240, 1164, 354, 1050, 359, 1050, 317, 1046, 315]],
  ["Pembina", 4, 1204, 281, 317, [1160, 240, 1237, 236, 1253, 318, 1249, 352, 1164, 354]],
  ["Williams", 171, 552, 380, 416, [490, 326, 617, 332, 618, 398, 622, 400, 620, 461, 600, 454, 578, 457, 575, 472, 540, 486, 536, 474, 541, 462, 533, 455, 522, 462, 522, 474, 510, 480, 498, 495, 486, 487]],
  ["Mountrail", 16, 674, 419, 455, [617, 355, 717, 357, 717, 400, 722, 402, 726, 533, 670, 533, 670, 553, 650, 552, 641, 535, 651, 495, 640, 475, 620, 461, 622, 400, 618, 398]],
  ["Ward", 122, 775, 440, 476, [699, 293, 714, 293, 714, 315, 731, 315, 733, 380, 819, 382, 824, 402, 828, 535, 726, 533, 722, 402, 717, 400, 717, 357, 689, 357, 690, 316, 699, 314]],
  ["McHenry", 10, 867, 437, 473, [820, 340, 890, 340, 890, 361, 905, 361, 910, 490, 914, 492, 914, 535, 828, 535, 824, 402, 819, 382]],
  ["Pierce", 3, 928, 420, 458, [905, 361, 991, 360, 992, 404, 953, 405, 957, 535, 914, 535, 914, 492, 910, 490]],
  ["Benson", 23, 997, 467, 503, [953, 405, 1024, 403, 1025, 455, 1040, 470, 1041, 495, 1055, 500, 1073, 480, 1072, 503, 1085, 494, 1090, 517, 1102, 515, 1102, 533, 957, 535]],
  ["Ramsey", 35, 1077, 414, 450, [1024, 403, 1050, 401, 1050, 359, 1122, 358, 1126, 441, 1111, 445, 1111, 488, 1102, 490, 1102, 515, 1090, 517, 1085, 494, 1072, 503, 1073, 480, 1055, 500, 1041, 495, 1040, 470, 1025, 455]],
  ["Walsh", 10, 1188, 380, 416, [1122, 358, 1164, 354, 1249, 352, 1252, 438, 1170, 441, 1126, 441]],
  ["Nelson", 1, 1142, 500, 537, [1111, 445, 1170, 441, 1174, 572, 1104, 574, 1102, 490, 1111, 488]],
  ["Grand Forks", 289, 1218, 491, 527, [1170, 441, 1252, 438, 1264, 485, 1283, 566, 1174, 572]],
  ["McKenzie", 23, 536, 552, 590, [486, 487, 498, 495, 510, 480, 522, 474, 522, 462, 533, 455, 541, 462, 536, 474, 540, 486, 575, 472, 578, 457, 600, 454, 620, 461, 640, 475, 651, 495, 641, 535, 640, 574, 588, 571, 587, 657, 481, 653]],
  ["Dunn", 4, 642, 641, 677, [588, 571, 640, 574, 641, 535, 650, 552, 670, 553, 683, 545, 684, 600, 690, 602, 694, 745, 593, 744, 593, 657, 587, 657]],
  ["McLean", 23, 812, 575, 611, [670, 533, 870, 535, 870, 580, 861, 580, 861, 665, 853, 666, 852, 709, 830, 709, 826, 682, 820, 676, 795, 680, 785, 670, 775, 625, 781, 610, 730, 620, 710, 603, 690, 602, 684, 600, 683, 545, 670, 553]],
  ["Wells", 2, 979, 587, 623, [929, 537, 1016, 535, 1020, 662, 934, 663]],
  ["Eddy", 19, 1061, 555, 581, [1016, 535, 1102, 533, 1104, 601, 1020, 598]],
  ["Foster", 11, 1063, 618, 644, [1020, 598, 1106, 601, 1106, 661, 1020, 662]],
  ["Griggs", 2, 1137, 614, 645, [1104, 574, 1163, 574, 1167, 680, 1111, 682, 1106, 661]],
  ["Steele", 5, 1190, 617, 647, [1163, 574, 1219, 570, 1222, 677, 1167, 680]],
  ["Traill", 6, 1255, 608, 645, [1219, 570, 1283, 566, 1289, 600, 1293, 674, 1222, 677]],
  ["Mercer", 19, 721, 647, 682, [690, 602, 710, 603, 730, 620, 781, 610, 775, 625, 785, 670, 795, 680, 795, 684, 737, 686, 737, 749, 697, 748, 694, 665, 690, 662]],
  ["Golden Valley", 6, 500, 756, 794, [481, 653, 523, 655, 521, 740, 526, 742, 526, 828, 502, 828, 502, 850, 474, 849]],
  ["Billings", 2, 555, 695, 731, [523, 655, 593, 657, 593, 744, 569, 744, 568, 830, 526, 828, 526, 742, 521, 740]],
  ["Stark", 225, 633, 773, 809, [569, 744, 697, 745, 699, 834, 568, 831]],
  ["Morton", 151, 802, 779, 815, [697, 750, 832, 752, 850, 825, 872, 853, 870, 895, 836, 895, 820, 925, 818, 905, 789, 905, 789, 840, 741, 838, 741, 816, 699, 818]],
  ["Burleigh", 435, 885, 737, 772, [853, 667, 925, 667, 928, 838, 850, 838, 850, 825, 832, 752, 836, 730, 830, 709, 852, 709]],
  ["Kidder", 8, 961, 737, 773, [925, 667, 996, 664, 1000, 838, 928, 838]],
  ["Stutsman", 137, 1054, 734, 770, [996, 664, 1110, 661, 1116, 836, 1000, 838]],
  ["Barnes", 44, 1157, 740, 776, [1110, 684, 1196, 681, 1202, 831, 1116, 835]],
  ["Cass", 425, 1250, 734, 770, [1196, 680, 1293, 674, 1297, 725, 1304, 755, 1304, 826, 1202, 831]],
  ["Slope", 1, 542, 854, 889, [502, 828, 568, 831, 602, 833, 602, 920, 472, 915, 474, 849, 502, 850]],
  ["Hettinger", 11, 655, 869, 896, [602, 833, 702, 838, 702, 915, 706, 942, 650, 940, 650, 922, 602, 920]],
  ["Bowman", 4, 535, 944, 980, [472, 915, 592, 921, 591, 1004, 470, 997]],
  ["Adams", 2, 641, 962, 989, [592, 921, 650, 922, 650, 940, 706, 942, 708, 1010, 591, 1004]],
  ["Sioux", 7, 838, 953, 989, [820, 925, 836, 895, 870, 895, 866, 955, 879, 1013, 708, 1010, 708, 985, 722, 978, 724, 990, 745, 988, 755, 995, 785, 970, 790, 960, 808, 955]],
  ["Emmons", 11, 912, 911, 947, [850, 838, 946, 840, 952, 1012, 879, 1013, 866, 955, 872, 853]],
  ["Logan", 2, 997, 866, 902, [948, 840, 1048, 838, 1048, 924, 948, 926]],
  ["LaMoure", 9, 1109, 857, 893, [1048, 838, 1163, 834, 1166, 920, 1050, 923]],
  ["Ransom", 7, 1208, 860, 896, [1163, 834, 1247, 829, 1251, 917, 1166, 920]],
  ["Richland", 22, 1290, 905, 941, [1247, 829, 1304, 826, 1310, 870, 1328, 910, 1335, 997, 1256, 1000, 1251, 917]],
  ["McIntosh", 2, 1009, 950, 986, [948, 926, 1052, 924, 1052, 1012, 952, 1012]],
  ["Dickey", 6, 1111, 950, 986, [1052, 924, 1167, 920, 1170, 1008, 1052, 1012]],
  ["Sargent", 9, 1210, 944, 980, [1167, 920, 1251, 917, 1256, 1001, 1170, 1008]],
];

function countyFill(v: number) {
  if (v > 400) return "#6b2114";
  if (v > 280) return "#b23a20";
  if (v > 200) return "#d34727";
  if (v > 160) return "#d95f43";
  if (v > 140) return "#da674e";
  if (v > 130) return "#dd6f58";
  if (v > 100) return "#df7961";
  if (v > 30) return "#e89f91";
  if (v > 12) return "#eaaa9e";
  return "#ecb1a6";
}

function CountySheet() {
  return (
    <section className="pr-[39px] pl-[45px]">
      <SheetHead className="h-[51px] pt-[9px]" helpClass="pb-[15px]">
        <h3 className={`${sheetTitle} pt-[3px]`}>NORTH DAKOTA COUNTY<br />ANALYSIS</h3>
      </SheetHead>
      <div className="grid grid-cols-[79fr_294fr_18fr] gap-x-[21px] pl-[13px]">
        <div className="flex flex-col gap-[7px] pt-[31px] text-[4px] whitespace-nowrap text-[#222]">
          <button className="h-4 rounded-[4px] bg-[#d34727] shadow-[0_0_0_1px_#a3a3a3,0_0_4px_2px_rgba(0,0,0,0.25)]">PRESS FOR ACTIVE POSITIVES</button>
          <button className={`${cardLook} h-4`}>PRESS FOR DAILY POSITIVES</button>
          <button className={`${cardLook} h-4`}>PRESS FOR CUMULATIVE POSITIVES</button>
          <button className={`${cardLook} h-4`}>PRESS FOR CUMULATIVE DEATHS</button>
          <button className={`${cardLook} h-4`}>PRESS FOR ACTIVE PER 10K</button>
        </div>
        <svg role="img" aria-label="Active positives by county" viewBox={`${sx(468)} ${sy(233)} ${sx(870)} ${sy(784)}`} className="block h-auto w-full overflow-visible">
          {counties.map(([name, v, , , , pts]) => (
            <polygon key={name} points={toPoints(pts)} fill={countyFill(v)} stroke="#a8867e" strokeWidth={0.4} />
          ))}
          {counties.map(([name, v, x, y1, y2]) => (
            <g key={name}>
              <Txt x={x} y={y1} s={4} fill="#fff" bold>{name}</Txt>
              <Txt x={x} y={y2} s={5} fill="#fbe9e5">{v}</Txt>
            </g>
          ))}
        </svg>
      </div>
    </section>
  );
}

const deathRows: [React.ReactNode, string][] = [
  [<><b>Deaths Due to COVID-19</b><br /><i>Official number of individuals who died from COVID-19 as stated on the official death record. There will be a delay - by state law, a death record must be filed within 10 days of the date of death.</i></>, "128"],
  [<><b>Deaths Where COVID-19 is Not the Primary Cause</b><br /><i>Deaths that list something other than COVID-19 as the official cause of death.</i></>, "28"],
  [<><b>Pending Death Records</b><br /><i>The number of deaths where an official death record has not been filed. Per state law, this can take up to 10 days from the date of death.</i></>, "4"],
  [<><b>Total</b> number of individuals who tested positive and died from any cause while infected with COVID-19.</>, "160"],
  [<>&nbsp;</>, ""],
  [<><b>Deaths of Individuals Presumed Positive</b><br />Deaths of individuals where COVID-19 was listed as the cause of death on the official death record, but there was not a positive test result. These individuals are presumed positive by the health care provider based on symptoms and/or exposure.</>, "3"],
];

const panels = [
  "By County - Total Tests Completed & Positive Cases",
  "By City & County – Long Term Care Cases & Deaths",
  "By County - Total Unique Tests, Positives, Negatives, Recovered, and Deaths",
  "By County - Source of Exposure",
  "By County - Rate per 100,000",
];

const Caret = () => <span className="ml-[3px] inline-block border-x-[3px] border-t-4 border-x-transparent border-t-current" />;

export default function App() {
  const navItem = "flex h-[27px] items-center px-[10px] text-[8px]";
  return (
    <div className="min-h-screen bg-white font-['Open_Sans',sans-serif] text-[#15233f]">
      <div className="flex h-[22px] border-b border-[#c8c8c8] bg-white">
        <a href="#" className="ml-[3px] text-[17px] leading-[21px] text-[#4a4a4a]">North Dakota</a>
        <div className="ml-[24px] flex">
          <a href="#" className="pr-[1px] text-[12px] leading-[18px] text-[#2a5fa5]">nd.gov</a>
          <a href="#" className="my-[3px] border-l border-[#999] pl-[2px] font-['Liberation_Sans',sans-serif] text-[8px] leading-[8px] whitespace-nowrap text-[#333]">
            Official Portal for<br />North Dakota State Government
          </a>
        </div>
      </div>
      <header className="flex h-[56px] items-center justify-between bg-[#eeeeee] pr-[42px] pl-[22px]">
        <Logo className="h-[45px] w-[131px]" />
        <form className="flex gap-[3px]">
          <input aria-label="Enter Keywords" placeholder="Enter Keywords" className="h-[23px] w-[152px] rounded-[3px] border border-[#ccc] bg-white px-2 text-[11px] placeholder:text-[#777]" />
          <button aria-label="Search" className="flex h-[23px] w-[27px] items-center justify-center rounded-[3px] bg-[#d34727] text-[10px] text-white"><FaSearch /></button>
        </form>
      </header>
      <nav className="flex flex-wrap pr-[22px] pl-[22px] text-black">
        <a href="#" className={navItem}>Home</a>
        <a href="#" className={`${navItem} bg-[#d34727] text-white`}>How we help<Caret /></a>
        <a href="#" className={navItem}>Who We Serve<Caret /></a>
        <a href="#" className={navItem}>Health Topics A-Z</a>
        <a href="#" className={navItem}>News</a>
        <a href="#" className={navItem}>Events</a>
        <a href="#" className={navItem}>About Us</a>
        <a href="#" className={navItem}>Report Fraud</a>
      </nav>
      <main>
        <nav aria-label="Breadcrumb" className="flex gap-[7px] px-[22px] pt-[6px] text-[11px] leading-4 text-[#666]">
          <a href="#" className="text-[#1a75ab]">Home</a>/
          <a href="#" className="ml-[2px] text-[#1a75ab]">Diseases &amp; Conditions</a>/
          <a href="#" className="ml-[2px] text-[#1a75ab]">Coronavirus</a>/
          <span className="ml-[2px]">Coronavirus Cases</span>
        </nav>
        <div className="mx-[22px] mt-[16px] flex flex-col border-b border-black">
          <h1 className="h-[38px] text-[26px] leading-9">Coronavirus Cases</h1>
          <div className="relative">
            <span className="absolute top-[1px] right-[22px] border-x-[7px] border-t-[5px] border-x-transparent border-t-black" />
          </div>
        </div>
        <div className="pt-[18px] pr-[30px] pl-[32px] text-[11px] leading-4">
          <p>WELCOME to the refreshed COVID-19 dashboard. In this revised format, you’ll find new county-level breakdowns, as well as additional statewide data. The dashboard is best viewed on a computer, but turning your mobile device to landscape will improve your experience. We welcome your feedback!</p>
          <p className="mt-[7px]">
            <a href="#" className="text-[#1a75ab]">
              Share Your Feedback
              <svg viewBox="0 0 10 10" className="ml-[1px] inline size-[7px]" fill="none" stroke="#999" strokeWidth="1">
                <path d="M4 2.500H.5v7h6V7M4 .5h5.500V6L7.500 4.500 4.500 7.500 2.800 5.800 5.800 2.800Z" />
              </svg>
            </a>
          </p>
          <p className="mt-[7px]">The North Dakota Department of Health dashboard is updated daily by 11 am and includes cases reported through the previous day. The investigations are ongoing and information on the website is likely to change as cases are investigated. The information on the dashboard is the most up to date and may be different than previous news releases.</p>
        </div>

        <div className="mt-[31px] min-h-[2530px]">
          <div className="grid grid-cols-[1fr_auto_1fr] pr-[50px] pl-[50px]">
            <div />
            <h2 className={bigTitle}>STATE and COUNTY<br />LEVEL INFORMATION</h2>
            <p className="-mt-[4px] text-right text-[6px] leading-[10px] text-[#333]">
              <span className="mr-[13px] text-[5px] font-bold">LAST UPDATED</span>
              <br />
              9/10/2020 9:13:46 AM
            </p>
          </div>
          <StatusSheet />
          <TrendsSheet />
          <h2 className={`${bigTitle} mt-[48px]`}>STATE LEVEL<br />INFORMATION</h2>
          <DemographicsSheet />
          <HospitalSheet />
          <CountySheet />
        </div>

        <div className="mr-[32px] ml-[32px] flex h-[26px] items-center border-t border-[#c8c8c8] bg-[#eaeaea] px-[9px] text-[#111]">
          <span className="flex-1 text-[9px] font-semibold">Microsoft Power BI</span>
          <button aria-label="Share" className="mr-[17px]">
            <svg viewBox="0 0 11 10" className="h-[10px] w-[11px]" fill="none" stroke="#111" strokeWidth="0.8">
              <path d="M1 2.500v7h7V7.500M6.800 1v2Q3.300 3.300 3 7.500q1.500-2.200 3.800-2.200v2L10.300 4Z" />
            </svg>
          </button>
          <button aria-label="Full screen">
            <svg viewBox="0 0 10 10" className="size-[10px]" fill="none" stroke="#111" strokeWidth="0.8">
              <path d="M1 9 9 1M6 .8h3.200V4M.8 6v3.200H4" />
            </svg>
          </button>
        </div>

        <div className="px-[32px] pt-[29px]">
          <h2 className="text-[13px] leading-[18px] font-bold">Serology Testing</h2>
          <p className="mt-[5px] font-['Liberation_Sans',sans-serif] text-[9px] leading-[18px] italic">Reported serology tests are completed in a laboratory and do not include point of care serology tests. Individuals who complete an antibody and a PCR test maybe be counted in totals for both.</p>
          <table className="mt-[6px] w-[73%] border-collapse border border-[#333] text-[11px] leading-4">
            <tbody>
              <tr>
                <td className="w-[33%] border border-[#777]">Detected</td>
                <td className="w-[48%] border border-[#777]">Not Detected</td>
                <td className="border border-[#777]">Total</td>
              </tr>
              <tr>
                <td className="border border-[#777]">367</td>
                <td className="border border-[#777]">8611</td>
                <td className="border border-[#777]">8978</td>
              </tr>
            </tbody>
          </table>
        </div>

        <h2 className="mt-[48px] ml-[22px] text-[18px] leading-6">Deaths</h2>
        <div className="px-[32px] pt-[3px]">
          <table className="w-full border-collapse border border-[#ddd] text-[11px] leading-[15px]">
            <thead>
              <tr>
                <th className="border border-b-2 border-[#ddd] px-[6px] py-[5px] text-left">Cause</th>
                <th className="w-[40px] border border-b-2 border-[#ddd] px-[4px] py-[5px] text-left">Cases</th>
              </tr>
            </thead>
            <tbody>
              {deathRows.map(([text, n], i) => (
                <tr key={i} className="align-top">
                  <td className="border border-[#ddd] py-[5px] pl-[6px]">{text}</td>
                  <td className="border border-[#ddd] px-[4px] py-[5px]">{n}</td>
                </tr>
              ))}
            </tbody>
          </table>
        </div>

        <div className="flex flex-col gap-5 px-[32px] pt-[35px] pb-[22px]">
          {panels.map((p) => (
            <button key={p} className="flex h-[45px] items-center justify-between rounded-[2px] border border-b-2 border-[#ddd] bg-[#f4f4f4] pr-[17px] pl-[17px] text-left text-[11px] font-semibold whitespace-nowrap text-[#333]">
              {p}
              <svg viewBox="0 0 10 10" className="size-[10px] shrink-0">
                <path d="M5 .3v9.400M.3 5h9.400" stroke="#1a75ab" strokeWidth="1.700" />
              </svg>
            </button>
          ))}
        </div>
      </main>

      <footer className="flex h-[191px] items-start bg-[#7a6f66] pl-[24px] text-[9px] leading-4 text-white">
        <div className="w-[171px] pt-[24px]">
          <p>
            Copyright © 2019 <a href="#" className="underline">North Dakota<br />Department of Health</a>
            <br />600 East Boulevard Ave Bismarck,<br />ND 58505-0200<br />Phone: 701-328-2372<br />
            <a href="#" className="underline">Contact Us</a>
          </p>
          <p className="mt-[30px]"><a href="#" className="underline">Intranet</a></p>
        </div>
        <div className="flex-1 pt-[24px] whitespace-nowrap">
          <p><a href="#">Accessibility</a><span className="mr-[6px] ml-[9px]">|</span><a href="#">Contact</a></p>
          <p><span className="mr-[6px]">|</span><a href="#">Disclaimer</a><span className="mr-[6px] ml-[9px]">|</span><a href="#">Privacy Policy</a></p>
          <p><span className="mr-[6px]">|</span><a href="#">Security Policy</a></p>
        </div>
        <div className="pt-[23px] pr-[23px]">
          <Logo className="h-[45px] w-[131px]" white />
          <div className="-ml-[18px] mt-[9px] flex items-center gap-[8px] text-[17px]">
            <a href="#" aria-label="Email"><FaEnvelope /></a>
            <a href="#" aria-label="Facebook"><FaFacebookSquare /></a>
            <a href="#" aria-label="Twitter"><FaTwitterSquare /></a>
            <a href="#" aria-label="YouTube"><FaYoutubeSquare /></a>
          </div>
        </div>
      </footer>
      <div className="h-[16px]" />
      <button className="fixed bottom-[2px] left-[7px] h-[22px] w-[86px] rounded-t-[5px] bg-[#d34727] text-[10px] font-bold text-white">Feedback (+)</button>
    </div>
  );
}
